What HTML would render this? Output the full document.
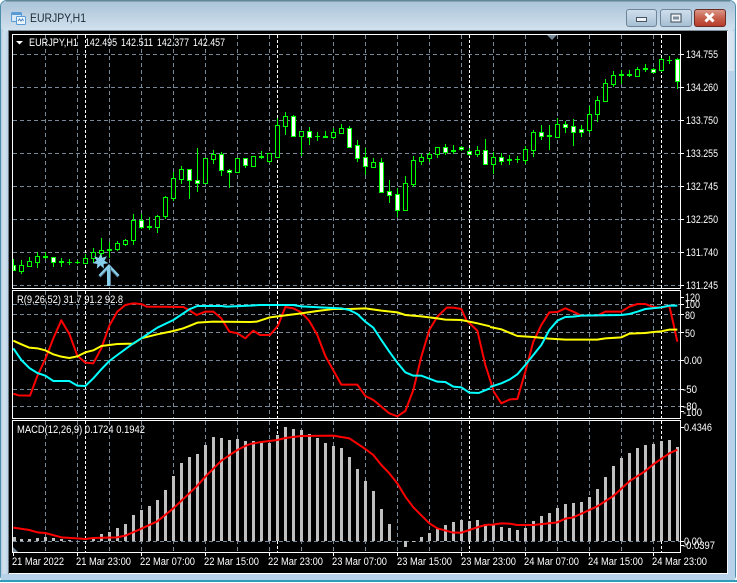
<!DOCTYPE html>
<html><head><meta charset="utf-8"><style>
html,body{margin:0;padding:0;background:#fff}
body{width:737px;height:583px;overflow:hidden}
svg{display:block}
text{font-family:"Liberation Sans",sans-serif;font-size:11px;fill:#fff}
</style></head><body>
<svg width="737" height="583" viewBox="0 0 737 583" xmlns="http://www.w3.org/2000/svg">
<defs>
<linearGradient id="tb" x1="0" y1="0" x2="0" y2="1"><stop offset="0" stop-color="#a9c3d8"/><stop offset="1" stop-color="#d3e2ee"/></linearGradient>
<linearGradient id="ts" x1="0" y1="0" x2="1" y2="0"><stop offset="0" stop-color="#b3cde6"/><stop offset=".35" stop-color="#d3e2ee"/><stop offset="1" stop-color="#b5cfe8"/></linearGradient>
<linearGradient id="btn" x1="0" y1="0" x2="0" y2="1"><stop offset="0" stop-color="#cfdfec"/><stop offset=".5" stop-color="#bcd0e1"/><stop offset="1" stop-color="#a5bdd2"/></linearGradient>
<linearGradient id="cls" x1="0" y1="0" x2="0" y2="1"><stop offset="0" stop-color="#dc9a8b"/><stop offset=".5" stop-color="#c75f4c"/><stop offset="1" stop-color="#b53a2a"/></linearGradient>
</defs>
<rect x="0.5" y="0.5" width="735" height="581" rx="6" fill="#b8d2ea" stroke="#4d8fa8"/>
<rect x="1" y="1" width="734" height="30" rx="5" fill="url(#tb)"/>
<path d="M6 1H730" stroke="#6d7f8c" stroke-width="1"/>
<rect x="1" y="31" width="8" height="549" fill="url(#ts)"/>
<rect x="727" y="31" width="8" height="549" fill="#b8d2ea"/>
<rect x="728" y="31" width="6" height="40" fill="#d6e4f0"/>
<rect x="1" y="574" width="734" height="6" fill="#b8d2ea"/>
<path d="M0 581H737" stroke="#2f9cb8" stroke-width="2"/>
<rect x="8" y="30" width="720" height="1" fill="#7f8d98"/>
<rect x="8" y="31" width="1" height="543" fill="#6f7d88"/>
<rect x="9" y="573" width="719" height="1" fill="#fff"/>
<rect x="727" y="31" width="1" height="543" fill="#f3f7fb"/>
<rect x="9" y="31" width="718" height="542" fill="#000"/>

<!-- title icon -->
<rect x="11.5" y="12.5" width="10" height="9" rx="1" fill="#d8e9f7" stroke="#5b9bd5"/>
<rect x="12" y="13" width="9" height="2" fill="#5b9bd5"/>
<rect x="16.5" y="16.5" width="9" height="8" rx="1" fill="#eef6fc" stroke="#5b9bd5"/>
<path d="M18 21l1.5-2 1.5 2 1.5-2 1 2" fill="none" stroke="#4a86c0"/>
<text x="30" y="22" style="font-size:12px;fill:#1d2a33" textLength="56" lengthAdjust="spacingAndGlyphs">EURJPY,H1</text>

<!-- buttons -->
<rect x="626.5" y="9.5" width="30" height="17" rx="2.500" fill="url(#btn)" stroke="#6d8499"/>
<rect x="636.5" y="17.5" width="10" height="4" fill="#f0f4f8" stroke="#47545f"/>
<rect x="660.5" y="9.5" width="31" height="17" rx="2.500" fill="url(#btn)" stroke="#6d8499"/>
<rect x="671" y="14" width="10" height="8" fill="#eef3f7" stroke="#3d4a55"/>
<rect x="673" y="16.5" width="6" height="3" fill="#7f8f9c"/>
<rect x="694.5" y="9.5" width="31" height="17" rx="2.500" fill="url(#cls)" stroke="#6b2a22"/>
<path d="M705.5 13.5l8 8M713.5 13.5l-8 8" stroke="#fff" stroke-width="3"/>

<!-- grid -->
<g fill="none">
<path stroke="#778899" stroke-dasharray="4 3" d="M13 54.5H680M13 87.5H680M13 120.5H680M13 153.5H680M13 186.5H680M13 219.5H680M13 252.5H680M13 285.5H680M13 304.5H680M13 314.5H680M13 332.5H680M13 360.5H680M13 389.5H680M13 406.5H680M13 541.5H680"/>
<path stroke="#778899" stroke-dasharray="4 3" d="M45.5 35V288M77.5 35V288M109.5 35V288M141.5 35V288M173.5 35V288M205.5 35V288M237.5 35V288M269.5 35V288M301.5 35V288M333.5 35V288M365.5 35V288M397.5 35V288M429.5 35V288M461.5 35V288M493.5 35V288M525.5 35V288M557.5 35V288M589.5 35V288M621.5 35V288M653.5 35V288
M45.5 291V418M77.5 291V418M109.5 291V418M141.5 291V418M173.5 291V418M205.5 291V418M237.5 291V418M269.5 291V418M301.5 291V418M333.5 291V418M365.5 291V418M397.5 291V418M429.5 291V418M461.5 291V418M493.5 291V418M525.5 291V418M557.5 291V418M589.5 291V418M621.5 291V418M653.5 291V418
M45.5 421V552M77.5 421V552M109.5 421V552M141.5 421V552M173.5 421V552M205.5 421V552M237.5 421V552M269.5 421V552M301.5 421V552M333.5 421V552M365.5 421V552M397.5 421V552M429.5 421V552M461.5 421V552M493.5 421V552M525.5 421V552M557.5 421V552M589.5 421V552M621.5 421V552M653.5 421V552"/>
<path stroke="#fff" stroke-dasharray="3 2" d="M85.5 35V288M277.5 35V288M469.5 35V288M661.5 35V288M85.5 291V418M277.5 291V418M469.5 291V418M661.5 291V418M85.5 421V552M277.5 421V552M469.5 421V552M661.5 421V552"/>
</g>

<!-- histogram -->
<path fill="none" stroke="#c0c0c0" stroke-width="3" d="M14.5 537V541M21.5 539V541M29.5 539V541M37.5 538V541M45.5 537V541M53.5 538V541M61.5 539V541M69.5 540V541M93.5 537V541M101.5 534V541M109.5 532V541M117.5 528V541M125.5 524V541M133.5 515V541M141.5 510V541M149.5 506V541M157.5 500V541M165.5 490V541M173.5 476V541M181.5 463V541M189.5 457V541M197.5 454V541M205.5 445V541M213.5 437V541M221.5 438V541M229.5 440V541M237.5 439V541M245.5 441V541M253.5 441V541M261.5 443V541M269.5 443V541M277.5 435V541M285.5 427V541M293.5 429V541M301.5 430V541M309.5 434V541M317.5 438V541M325.5 443V541M333.5 446V541M341.5 448V541M349.5 457V541M357.5 469V541M365.5 481V541M373.5 491V541M381.5 509V541M389.5 524V541M405.5 541V547M413.5 541V542M421.5 537V541M429.5 533V541M437.5 529V541M445.5 525V541M453.5 522V541M461.5 520V541M469.5 521V541M477.5 520V541M485.5 524V541M493.5 525V541M501.5 527V541M509.5 528V541M517.5 530V541M525.5 528V541M533.5 521V541M541.5 516V541M549.5 513V541M557.5 508V541M565.5 504V541M573.5 503V541M581.5 502V541M589.5 497V541M597.5 489V541M605.5 477V541M613.5 466V541M621.5 458V541M629.5 453V541M637.5 448V541M645.5 445V541M653.5 444V541M661.5 441V541M669.5 440V541M677.5 447V541"/>

<!-- MACD signal -->
<g fill="none" stroke="#f00" stroke-width="6" stroke-linejoin="round">
<polyline transform="translate(0 420) scale(.33333)" points="40,323 88,330 112,337 136,339 184,352 232,355 256,357 280,354 350,352 376,347 424,326 472,304 520,265 568,220 592,197 616,170 664,122 712,90 736,78 750,72"/>
<polyline transform="translate(250 420) scale(.33333)" points="0,72 34,66 82,60 106,54 154,48 250,47 298,55 346,87 370,105 394,135 418,160 442,190 466,230 490,262 538,310 562,325 610,338 634,338 658,330 682,322 706,315 720,314"/>
<polyline transform="translate(490 420) scale(.33333)" points="0,315 34,310 58,311 82,315 130,315 202,307 226,296 250,292 298,270 322,259 370,228 418,184 466,153 490,133 538,100 562,89"/>
</g>

<!-- indicator lines -->
<g fill="none" stroke-width="6" stroke-linejoin="round">
<g stroke="#f00">
<polyline transform="translate(0 285) scale(.33333)" points="40,326 55,331 90,332 112,273 136,222 160,160 184,106 208,147 232,212 256,233 280,235 304,190 328,122 352,80 376,60 400,55 424,57 440,65 550,66 568,76 590,90 616,80 640,80 664,100 688,140 712,145 736,160 750,146"/>
<polyline transform="translate(250 285) scale(.33333)" points="0,146 10,137 30,150 60,150 84,122 106,66 130,70 154,82 178,108 202,150 226,213 274,299 322,299 346,333 370,345 418,385 442,394 466,378 490,315 514,215 538,135 562,95 590,68 610,68 634,72 650,107 682,137 706,240 730,315"/>
<polyline transform="translate(490 285) scale(.33333)" points="10,318 34,355 60,343 82,342 106,260 130,170 154,120 178,82 202,81 226,70 250,80 274,92 322,92 346,80 394,80 418,65 442,57 466,57 490,66 514,68 538,63 550,115 562,170"/>
</g>
<g stroke="#ff0">
<polyline transform="translate(0 285) scale(.33333)" points="40,167 64,178 88,188 112,190 136,196 160,208 184,215 208,219 232,214 256,202 280,196 304,183 328,180 352,177 400,176 424,160 472,148 520,138 550,130 570,122 592,113 640,110 750,111"/>
<polyline transform="translate(250 285) scale(.33333)" points="0,111 20,110 60,97 106,91 154,85 202,78 250,72 298,72 346,70 394,77 442,82 466,90 514,94 562,100 586,104 634,105 682,115 720,124"/>
<polyline transform="translate(490 285) scale(.33333)" points="0,126 34,133 82,153 130,156 178,161 226,164 322,164 346,160 394,157 418,146 466,144 490,141 514,139 538,134 562,134"/>
</g>
<g stroke="#0ff">
<polyline transform="translate(0 285) scale(.33333)" points="40,190 64,225 88,249 112,264 136,272 160,288 208,288 232,302 256,303 280,280 304,253 328,228 352,210 400,175 424,160 472,128 520,105 568,73 592,63 664,63 680,65 750,62"/>
<polyline transform="translate(250 285) scale(.33333)" points="0,62 30,60 130,60 154,64 226,68 274,70 298,75 322,87 346,110 370,128 394,165 418,200 442,233 466,262 490,272 514,272 562,290 586,291 610,305 634,307 658,323 686,324 710,314 720,310"/>
<polyline transform="translate(490 285) scale(.33333)" points="0,306 34,295 60,283 82,268 106,240 130,210 154,180 178,135 202,107 226,96 250,95 274,92 394,90 418,87 442,80 466,72 514,67 538,62 562,62"/>
</g>
</g>

<!-- candles -->
<g>
<path fill="none" stroke="#0f0" d="M13.5 259V271M21.5 260V274M29.5 257V266M37.5 252V268M45.5 252V259M53.5 257V267M61.5 258V267M69.5 259V265M77.5 260V264M85.5 254V263M93.5 248V263M101.5 238V257M109.5 242V258M117.5 241V251M125.5 239V246M133.5 214V245M141.5 214V229M149.5 217V230M157.5 215V233M165.5 196V219M173.5 172V201M181.5 166V184M189.5 169V199M197.5 148V192M205.5 158V184M213.5 150V164M221.5 152V176M229.5 169V188M237.5 158V173M245.5 158V168M253.5 156V167M261.5 151V159M269.5 153V163M277.5 118V157M285.5 112V135M293.5 115V137M301.5 131V156M309.5 127V145M317.5 132V141M325.5 131V138M333.5 128V139M341.5 124V133M349.5 126V147M357.5 140V162M365.5 148V175M373.5 158V168M381.5 158V193M389.5 180V203M397.5 188V217M405.5 176V211M413.5 156V187M421.5 154V165M429.5 152V162M437.5 147V158M445.5 144V155M453.5 145V154M461.5 146V151M469.5 148V156M477.5 146V157M485.5 139V165M493.5 152V174M501.5 153V165M509.5 155V165M517.5 156V163M525.5 146V164M533.5 130V157M541.5 125V140M549.5 125V150M557.5 118V137M565.5 121V133M573.5 119V146M581.5 125V137M589.5 106V133M597.5 96V122M605.5 79V102M613.5 71V87M621.5 70V84M629.5 70V77M637.5 67V77M645.5 64V72M653.5 68V73M661.5 58V72M669.5 56V64M677.5 58V89"/>
<path fill="#000" stroke="#0f0" d="M19.5 265.5h4v6h-4zM27.5 261.5h4v5h-4zM35.5 256.5h4v6h-4zM83.5 258.5h4v5h-4zM91.5 252.5h4v6h-4zM99.5 250.5h4v3h-4zM115.5 243.5h4v6h-4zM123.5 240.5h4v4h-4zM131.5 220.5h4v20h-4zM155.5 216.5h4v11h-4zM163.5 197.5h4v19h-4zM171.5 178.5h4v20h-4zM179.5 169.5h4v10h-4zM203.5 158.5h4v25h-4zM211.5 154.5h4v5h-4zM235.5 158.5h4v14h-4zM251.5 156.5h4v10h-4zM267.5 153.5h4v8h-4zM275.5 125.5h4v32h-4zM283.5 116.5h4v10h-4zM299.5 131.5h4v5h-4zM331.5 132.5h4v5h-4zM339.5 128.5h4v5h-4zM371.5 162.5h4v5h-4zM403.5 183.5h4v27h-4zM411.5 160.5h4v24h-4zM419.5 157.5h4v4h-4zM427.5 154.5h4v4h-4zM435.5 147.5h4v7h-4zM475.5 150.5h4v4h-4zM491.5 157.5h4v7h-4zM523.5 149.5h4v11h-4zM531.5 132.5h4v18h-4zM555.5 124.5h4v13h-4zM587.5 114.5h4v16h-4zM595.5 100.5h4v14h-4zM603.5 83.5h4v18h-4zM611.5 75.5h4v9h-4zM635.5 69.5h4v7h-4zM659.5 59.5h4v11h-4z"/>
<path fill="#fff" stroke="#0f0" d="M13.5 265.5h2v5h-2zM51.5 257.5h4v5h-4zM139.5 220.5h4v7h-4zM187.5 169.5h4v11h-4zM195.5 180.5h4v3h-4zM219.5 154.5h4v16h-4zM227.5 170.5h4v2h-4zM243.5 158.5h4v7h-4zM291.5 116.5h4v20h-4zM307.5 131.5h4v6h-4zM347.5 128.5h4v19h-4zM355.5 145.5h4v13h-4zM363.5 157.5h4v9h-4zM379.5 162.5h4v30h-4zM387.5 191.5h4v4h-4zM395.5 194.5h4v16h-4zM443.5 147.5h4v5h-4zM459.5 147.5h4v2h-4zM467.5 151.5h4v3h-4zM483.5 150.5h4v14h-4zM499.5 157.5h4v4h-4zM539.5 132.5h4v4h-4zM563.5 124.5h4v3h-4zM571.5 126.5h4v6h-4zM579.5 129.5h4v3h-4zM651.5 69.5h4v3h-4zM675.5 59.5h4v22h-4z"/>
<path fill="#0f0" d="M43 256h5v2h-5zM59 261h5v2h-5zM67 262h5v1h-5zM75 262h5v1h-5zM107 249h5v2h-5zM147 226h5v2h-5zM259 156h5v2h-5zM315 136h5v1h-5zM323 136h5v2h-5zM451 150h5v2h-5zM507 159h5v2h-5zM515 159h5v1h-5zM547 135h5v2h-5zM619 74h5v2h-5zM627 74h5v2h-5zM643 68h5v2h-5zM667 60h5v1h-5z"/>
</g>

<!-- star and arrow -->
<path fill="#87ceeb" d="M100.5 253.5l1.700 4.300 4.800-1.600-2.600 4.400 4.100 2.600-4.900.8.300 4.800-3.400-3.400-3.600 3.400.4-4.800-4.900-.9 4.200-2.500-2.600-4.400 4.800 1.700z"/>
<path fill="none" stroke="#5b7f95" stroke-width="3" d="M99.500 276.500l9.500-10 9.500 10"/>
<path fill="none" stroke="#87ceeb" stroke-width="2" d="M99.500 275.500l9.500-10 9.500 10"/>
<rect x="107" y="267" width="4" height="19" fill="#87ceeb"/>
<rect x="110" y="267" width="1" height="19" fill="#5b7f95"/>

<!-- frames -->
<g fill="none" stroke="#fff">
<rect x="12.5" y="34.5" width="668" height="254"/>
<rect x="12.5" y="290.5" width="668" height="128"/>
<rect x="12.5" y="420.5" width="668" height="132"/>
</g>
<path fill="#778899" d="M547 35h10l-5 5z"/>
<path fill="#778899" d="M13 547v5h5z"/>
<path fill="#fff" d="M16 41h7l-3.500 3.500z"/>

<!-- ticks -->
<path stroke="#fff" fill="none" d="M681 54.500h3M681 87.500h3M681 120.500h3M681 153.500h3M681 186.500h3M681 219.500h3M681 252.500h3M681 285.500h3M681 297.500h3M681 304.500h3M681 314.500h3M681 332.500h3M681 360.500h3M681 389.500h3M681 406.500h3M681 411.500h3M681 427.500h3M681 541.500h3M681 545.500h3M13.500 553v3M77.500 553v3M141.500 553v3M205.500 553v3M269.500 553v3M333.500 553v3M397.500 553v3M461.500 553v3M525.500 553v3M589.500 553v3M653.500 553v3"/>

<!-- chart texts -->
<g lengthAdjust="spacingAndGlyphs">
<text x="29" y="46" textLength="49" lengthAdjust="spacingAndGlyphs">EURJPY,H1</text>
<text x="85" y="46" textLength="32" lengthAdjust="spacingAndGlyphs">142.495</text>
<text x="121" y="46" textLength="32" lengthAdjust="spacingAndGlyphs">142.511</text>
<text x="157" y="46" textLength="32" lengthAdjust="spacingAndGlyphs">142.377</text>
<text x="193" y="46" textLength="32" lengthAdjust="spacingAndGlyphs">142.457</text>
<text x="17" y="303" textLength="106" lengthAdjust="spacingAndGlyphs">R(9,26,52) 31.7 91.2 92.8</text>
<text x="17" y="433" textLength="128" lengthAdjust="spacingAndGlyphs">MACD(12,26,9) 0.1724 0.1942</text>

<text x="686" y="58" textLength="32" lengthAdjust="spacingAndGlyphs">134.755</text>
<text x="686" y="91" textLength="32" lengthAdjust="spacingAndGlyphs">134.260</text>
<text x="686" y="124" textLength="32" lengthAdjust="spacingAndGlyphs">133.750</text>
<text x="686" y="157" textLength="32" lengthAdjust="spacingAndGlyphs">133.255</text>
<text x="686" y="190" textLength="32" lengthAdjust="spacingAndGlyphs">132.745</text>
<text x="686" y="223" textLength="32" lengthAdjust="spacingAndGlyphs">132.250</text>
<text x="686" y="256" textLength="32" lengthAdjust="spacingAndGlyphs">131.740</text>
<text x="686" y="289" textLength="32" lengthAdjust="spacingAndGlyphs">131.245</text>

<text x="685" y="301" textLength="15" lengthAdjust="spacingAndGlyphs">120</text>
<text x="685" y="308" textLength="15" lengthAdjust="spacingAndGlyphs">100</text>
<text x="685" y="319" textLength="10" lengthAdjust="spacingAndGlyphs">80</text>
<text x="685" y="337" textLength="10" lengthAdjust="spacingAndGlyphs">50</text>
<text x="684" y="364" textLength="18" lengthAdjust="spacingAndGlyphs">0.00</text>
<text x="683" y="393" textLength="14" lengthAdjust="spacingAndGlyphs">-50</text>
<text x="683" y="410" textLength="14" lengthAdjust="spacingAndGlyphs">-80</text>
<text x="683" y="416" textLength="19" lengthAdjust="spacingAndGlyphs">-100</text>
<text x="684" y="431" textLength="28" lengthAdjust="spacingAndGlyphs">0.4346</text>
<text x="684" y="545" textLength="18" lengthAdjust="spacingAndGlyphs">0.00</text>
<text x="683" y="549" textLength="32" lengthAdjust="spacingAndGlyphs">-0.0397</text>

<text x="12" y="565" textLength="52" lengthAdjust="spacingAndGlyphs">21 Mar 2022</text>
<text x="76" y="565" textLength="55" lengthAdjust="spacingAndGlyphs">21 Mar 23:00</text>
<text x="140" y="565" textLength="55" lengthAdjust="spacingAndGlyphs">22 Mar 07:00</text>
<text x="204" y="565" textLength="55" lengthAdjust="spacingAndGlyphs">22 Mar 15:00</text>
<text x="268" y="565" textLength="55" lengthAdjust="spacingAndGlyphs">22 Mar 23:00</text>
<text x="332" y="565" textLength="55" lengthAdjust="spacingAndGlyphs">23 Mar 07:00</text>
<text x="397" y="565" textLength="55" lengthAdjust="spacingAndGlyphs">23 Mar 15:00</text>
<text x="461" y="565" textLength="55" lengthAdjust="spacingAndGlyphs">23 Mar 23:00</text>
<text x="524" y="565" textLength="55" lengthAdjust="spacingAndGlyphs">24 Mar 07:00</text>
<text x="588" y="565" textLength="55" lengthAdjust="spacingAndGlyphs">24 Mar 15:00</text>
<text x="652" y="565" textLength="55" lengthAdjust="spacingAndGlyphs">24 Mar 23:00</text>
</g>
</svg>
</body></html>
